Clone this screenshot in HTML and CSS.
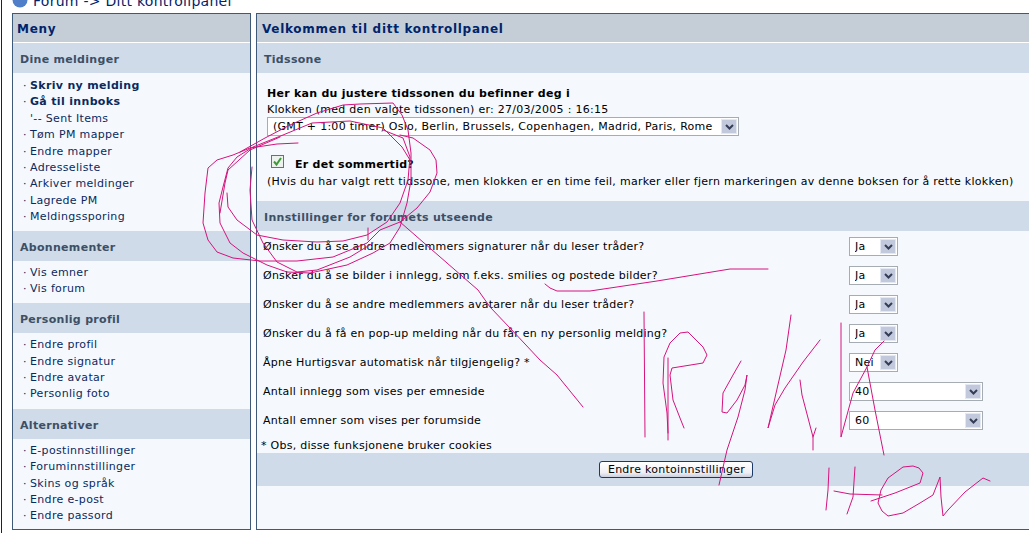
FILE: index.html
```html
<!DOCTYPE html>
<html lang="no">

<head>
    <meta charset="UTF-8">
    <title>Ditt kontrollpanel</title>
    <link rel="stylesheet" href="styles.css">
</head>

<body>
    <div class="page">
        <div class="crumb">
            <svg class="globe" width="16" height="16" viewBox="0 0 16 16">
                <circle cx="8" cy="8" r="7.5" fill="#4f7fc8" />
                <circle cx="6" cy="5" r="3" fill="#a9c6ee" />
            </svg>
            <span>Forum -&gt; Ditt kontrollpanel</span>
        </div>

        <div class="columns">
            <div class="menu">
                <div class="title">Meny</div>

                <div class="band">Dine meldinger</div>
                <ul class="first">
                    <li><b>Skriv ny melding</b></li>
                    <li><b>Gå til innboks</b></li>
                    <li class="sub">'-- Sent Items</li>
                    <li>Tøm PM mapper</li>
                    <li>Endre mapper</li>
                    <li>Adresseliste</li>
                    <li>Arkiver meldinger</li>
                    <li>Lagrede PM</li>
                    <li>Meldingssporing</li>
                </ul>

                <div class="band">Abonnementer</div>
                <ul>
                    <li>Vis emner</li>
                    <li>Vis forum</li>
                </ul>

                <div class="band">Personlig profil</div>
                <ul>
                    <li>Endre profil</li>
                    <li>Endre signatur</li>
                    <li>Endre avatar</li>
                    <li>Personlig foto</li>
                </ul>

                <div class="band">Alternativer</div>
                <ul>
                    <li>E-postinnstillinger</li>
                    <li>Foruminnstillinger</li>
                    <li>Skins og språk</li>
                    <li>Endre e-post</li>
                    <li>Endre passord</li>
                </ul>
            </div>

            <div class="main">
                <div class="title">Velkommen til ditt kontrollpanel</div>

                <div class="band">Tidssone</div>
                <div class="zone">
                    <div class="zone-head">Her kan du justere tidssonen du befinner deg i</div>
                    <div>Klokken (med den valgte tidssonen) er: 27/03/2005 : 16:15</div>
                    <div class="pick zone-pick">
                        <select>
                            <option>(GMT + 1:00 timer) Oslo, Berlin, Brussels, Copenhagen, Madrid, Paris, Rome</option>
                        </select>
                        <span class="arrow"><svg width="9" height="6" viewBox="0 0 9 6"><path d="M1 1l3.5 3.5L8 1" fill="none" stroke="#333d55" stroke-width="2" /></svg></span>
                    </div>
                    <div class="summer">
                        <span class="check"><svg width="11" height="11" viewBox="0 0 11 11"><path d="M2 5.5l2.5 3L9 2" fill="none" stroke="#3f9a3a" stroke-width="2" /></svg></span>
                        <b>Er det sommertid?</b>
                    </div>
                    <div class="hint">(Hvis du har valgt rett tidssone, men klokken er en time feil, marker eller fjern markeringen av denne boksen for å rette klokken)</div>
                </div>

                <div class="band">Innstillinger for forumets utseende</div>
                <div class="settings">
                    <div class="row">
                        <span class="label">Ønsker du å se andre medlemmers signaturer når du leser tråder?</span>
                        <div class="pick small"><select><option>Ja</option></select><span class="arrow"><svg width="9" height="6" viewBox="0 0 9 6"><path d="M1 1l3.5 3.5L8 1" fill="none" stroke="#333d55" stroke-width="2" /></svg></span></div>
                    </div>
                    <div class="row">
                        <span class="label">Ønsker du å se bilder i innlegg, som f.eks. smilies og postede bilder?</span>
                        <div class="pick small"><select><option>Ja</option></select><span class="arrow"><svg width="9" height="6" viewBox="0 0 9 6"><path d="M1 1l3.5 3.5L8 1" fill="none" stroke="#333d55" stroke-width="2" /></svg></span></div>
                    </div>
                    <div class="row">
                        <span class="label">Ønsker du å se andre medlemmers avatarer når du leser tråder?</span>
                        <div class="pick small"><select><option>Ja</option></select><span class="arrow"><svg width="9" height="6" viewBox="0 0 9 6"><path d="M1 1l3.5 3.5L8 1" fill="none" stroke="#333d55" stroke-width="2" /></svg></span></div>
                    </div>
                    <div class="row">
                        <span class="label">Ønsker du å få en pop-up melding når du får en ny personlig melding?</span>
                        <div class="pick small"><select><option>Ja</option></select><span class="arrow"><svg width="9" height="6" viewBox="0 0 9 6"><path d="M1 1l3.5 3.5L8 1" fill="none" stroke="#333d55" stroke-width="2" /></svg></span></div>
                    </div>
                    <div class="row">
                        <span class="label">Åpne Hurtigsvar automatisk når tilgjengelig? *</span>
                        <div class="pick small"><select><option>Nei</option></select><span class="arrow"><svg width="9" height="6" viewBox="0 0 9 6"><path d="M1 1l3.5 3.5L8 1" fill="none" stroke="#333d55" stroke-width="2" /></svg></span></div>
                    </div>
                    <div class="row">
                        <span class="label">Antall innlegg som vises per emneside</span>
                        <div class="pick wide"><select><option>40</option></select><span class="arrow"><svg width="9" height="6" viewBox="0 0 9 6"><path d="M1 1l3.5 3.5L8 1" fill="none" stroke="#333d55" stroke-width="2" /></svg></span></div>
                    </div>
                    <div class="row">
                        <span class="label">Antall emner som vises per forumside</span>
                        <div class="pick wide"><select><option>60</option></select><span class="arrow"><svg width="9" height="6" viewBox="0 0 9 6"><path d="M1 1l3.5 3.5L8 1" fill="none" stroke="#333d55" stroke-width="2" /></svg></span></div>
                    </div>
                    <div class="note">* Obs, disse funksjonene bruker cookies</div>
                </div>

                <div class="submit-bar"><button>Endre kontoinnstillinger</button></div>
            </div>
        </div>

        <!-- pen scribbles drawn on top of the screenshot -->
        <svg class="ink" width="1029" height="533" viewBox="0 0 1029 533">
            <g fill="none" stroke="#d6127e" stroke-width="1" stroke-linejoin="round" stroke-linecap="round">
                <path d="M298 143L277 144L250 148L233 155L217 160L208 168L205 193L203 223L208 240L217 252L233 258L260 261L297 261L333 257L367 243L380 230L400 222L417 208L430 192L437 173L436 160L430 150L413 138L400 135" />
                <path d="M240 152L265 138L290 125L317 113L343 105L360 104L393 103L402 115L408 130L411 153L411 180L407 203L400 227L390 243L373 253L347 265L310 273L287 272L267 265L243 253L230 243L220 223L219 203L223 187L228 168L237 157L253 147L283 135L312 123L350 121L383 128L402 147L410 160" />
                <path d="M227 193L228 207L237 220L257 235L283 240L317 242L343 241L367 235L387 222L400 203L408 180L410 157L403 138L383 130" />
                <path d="M252 167L250 190L252 220L263 243L277 262L297 272L317 270L350 257L373 243" />
                <path d="M220 213L225 183L228 170L250 150L280 137" />
                <path d="M368 228L368 240" />
                <path d="M400 222L478 290L490 307L510 328L540 360L557 375L583 407" />
                <path d="M545 284L550 288L557 291L590 291L657 281L730 269L768 269" />
                <path d="M644 312L645 437" />
                <path d="M668 358L668 440" />
                <path d="M684 428L680 418L673 400L670 375L672 368L703 363L707 355L703 347L688 332L680 333L670 343L664 357L663 383L667 413L668 433" />
                <path d="M741 361L733 375L723 393L722 412L727 413L737 400L745 385L747 375L745 390L738 417L727 450L719 485" />
                <path d="M791 315L786 350L768 428L775 405L785 388L803 362L820 340" />
                <path d="M800 380L802 395L813 437L813 450M813 437L816 428" />
                <path d="M841 323L841 437L853 393L867 367L875 350L884 341M867 367L875 410L884 455" />
                <path d="M829 468L828 490L826 510M855 467L853 497L847 514M834 491L850 494L882 495" />
                <path d="M871 501L895 493L920 483L923 473L919 468L913 466L903 467L888 478L881 490L878 503L882 511L888 516L903 513L920 503L933 495L940 477L941 497L943 516L948 510L965 492L983 478L990 481" />
            </g>
        </svg>
    </div>
</body>

</html>
```

FILE: styles.css
```css
html,
body {
    margin: 0;
    height: 533px;
    overflow: hidden;
    background: #fff;
}

body {
    font-family: "DejaVu Sans", Verdana, sans-serif;
    font-size: 11px;
    letter-spacing: 0.27px;
    color: #000;
}

.page {
    position: relative;
    height: 533px;
    margin-left: 1px;
    border-left: 1px solid #222;
    padding-left: 10px;
    overflow: hidden;
}

.crumb {
    height: 13px;
    display: flex;
    align-items: flex-end;
    gap: 5px;
    font-size: 14px;
    color: #00246b;
    overflow: hidden;
}

.crumb span {
    line-height: 16px;
    margin-bottom: 4px;
}

.globe {
    flex: none;
    margin-bottom: 5px;
}

.columns {
    display: flex;
    gap: 5px;
    height: 517px;
}

.menu,
.main {
    border: 1px solid #3e5a78;
    background: #f5f9fd;
}

.menu {
    width: 237px;
    flex: none;
}

.main {
    flex: 1;
    margin-right: -4px;
}

.title {
    height: 28px;
    line-height: 30px;
    padding-left: 4px;
    background: #c5ced6;
    border-bottom: 1px solid #fff;
    color: #00246b;
    font-weight: bold;
    font-size: 12px;
    letter-spacing: 0.7px;
}

.main .title {
    padding-left: 5px;
}

.band {
    height: 28px;
    padding: 2px 0 0 7px;
    line-height: 30px;
    background: #cfdbe8;
    color: #3d4f66;
    font-weight: bold;
    letter-spacing: 0.3px;
}

ul {
    list-style: none;
    margin: 0;
    padding: 4px 0 6px 10px;
}

ul.first {
    padding-top: 5px;
    padding-bottom: 5px;
}

li {
    height: 16.4px;
    line-height: 16.4px;
    padding-left: 7px;
    color: #0a2a5e;
    letter-spacing: 0.33px;
    position: relative;
}

li::before {
    content: "·";
    position: absolute;
    left: 0;
}

li.sub::before {
    content: none;
}

.zone {
    height: 128px;
    padding: 13px 0 0 10px;
    box-sizing: border-box;
    line-height: 16px;
}

.zone-head {
    font-weight: bold;
}

.pick {
    position: relative;
    height: 19px;
    box-sizing: border-box;
    border: 1px solid #a5acb2;
    background: #fff;
    flex: none;
}

.pick select {
    appearance: none;
    display: block;
    width: 100%;
    height: 100%;
    border: none;
    background: none;
    padding: 0 0 0 5px;
    margin: 0;
    font: inherit;
    letter-spacing: inherit;
    color: #000;
}

.arrow {
    position: absolute;
    right: 1px;
    top: 1px;
    width: 16px;
    height: 15px;
    box-sizing: border-box;
    display: flex;
    align-items: center;
    justify-content: center;
    background: #c3c9dc;
    border: 1px solid #e4e8f2;
}

.zone-pick {
    width: 472px;
    margin-top: -1px;
}

.summer {
    display: flex;
    align-items: flex-start;
    gap: 11px;
    margin: 19px 0 0 4px;
    line-height: 14px;
    height: 14px;
}

.summer b {
    margin-top: 3px;
}

.check {
    width: 13px;
    height: 13px;
    box-sizing: border-box;
    border: 1px solid #5a7a6a;
    background: #eef2ee;
    display: flex;
    align-items: center;
    justify-content: center;
}

.hint {
    margin-top: 5px;
}

.settings {
    padding: 1px 0 0 6px;
}

.row {
    display: flex;
    align-items: center;
    height: 29px;
}

.label {
    width: 586px;
    flex: none;
    letter-spacing: 0.24px;
}

.small {
    width: 49px;
}

.wide {
    width: 134px;
}

.note {
    line-height: 15px;
    margin: 3px 0 0 -2px;
}

.submit-bar {
    height: 33px;
    background: #cfdbe8;
    display: flex;
    justify-content: center;
    align-items: center;
    padding-left: 62px;
}

button {
    width: 154px;
    height: 17px;
    padding: 0 0 0 2px;
    font: inherit;
    letter-spacing: inherit;
    color: #000;
    border: 1px solid #1c3a66;
    border-radius: 3px;
    background: linear-gradient(#ffffff, #f0f0f4 70%, #c9cfdc);
}

.ink {
    position: absolute;
    left: -2px;
    top: 0;
    pointer-events: none;
}
```
